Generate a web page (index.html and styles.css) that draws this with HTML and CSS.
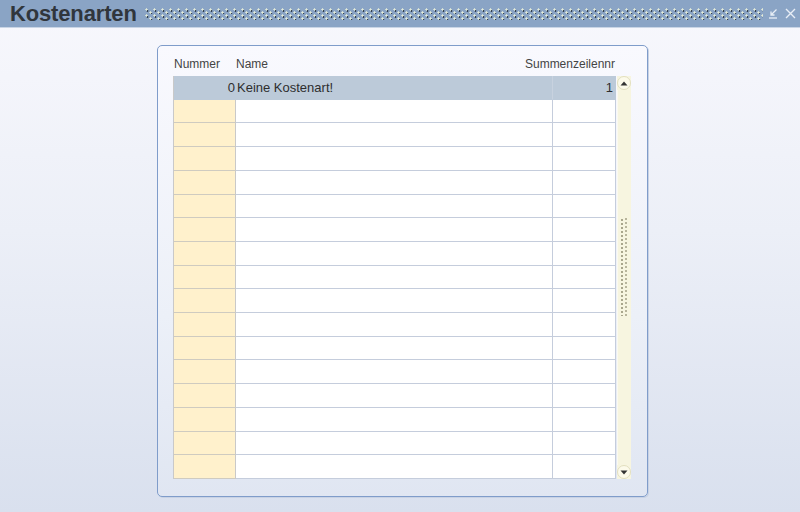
FILE: index.html
```html
<!DOCTYPE html>
<html>
<head>
<meta charset="utf-8">
<link rel="stylesheet" href="styles.css">
</head>
<body>
<div class="titlebar">
  <div class="title">Kostenarten</div>
  <div class="dots"></div>
  <div class="tools">
    <svg class="ico" width="11" height="11" viewBox="0 0 11 11"><path d="M8.5 1.5 L3 7 M3 3.5 V7 H6.5" fill="none" stroke="#e8eef6" stroke-width="1.3"/><path d="M1 10 H9" stroke="#e8eef6" stroke-width="1.3"/></svg>
    <svg class="ico" width="11" height="11" viewBox="0 0 11 11"><path d="M1 1 L10 10 M10 1 L1 10" stroke="#e8eef6" stroke-width="1.4"/></svg>
  </div>
</div>
<div class="content">
  <div class="panel">
    <div class="head">
      <div class="h-num">Nummer</div>
      <div class="h-name">Name</div>
      <div class="h-sum">Summenzeilennr</div>
    </div>
    <div class="body">
      <div class="table">
        <div class="row sel"><div class="c num">0</div><div class="c name">Keine Kostenart!</div><div class="c sum">1</div></div>
        <div class="row"><div class="c num"></div><div class="c name"></div><div class="c sum"></div></div>
        <div class="row"><div class="c num"></div><div class="c name"></div><div class="c sum"></div></div>
        <div class="row"><div class="c num"></div><div class="c name"></div><div class="c sum"></div></div>
        <div class="row"><div class="c num"></div><div class="c name"></div><div class="c sum"></div></div>
        <div class="row"><div class="c num"></div><div class="c name"></div><div class="c sum"></div></div>
        <div class="row"><div class="c num"></div><div class="c name"></div><div class="c sum"></div></div>
        <div class="row"><div class="c num"></div><div class="c name"></div><div class="c sum"></div></div>
        <div class="row"><div class="c num"></div><div class="c name"></div><div class="c sum"></div></div>
        <div class="row"><div class="c num"></div><div class="c name"></div><div class="c sum"></div></div>
        <div class="row"><div class="c num"></div><div class="c name"></div><div class="c sum"></div></div>
        <div class="row"><div class="c num"></div><div class="c name"></div><div class="c sum"></div></div>
        <div class="row"><div class="c num"></div><div class="c name"></div><div class="c sum"></div></div>
        <div class="row"><div class="c num"></div><div class="c name"></div><div class="c sum"></div></div>
        <div class="row"><div class="c num"></div><div class="c name"></div><div class="c sum"></div></div>
        <div class="row"><div class="c num"></div><div class="c name"></div><div class="c sum"></div></div>
        <div class="row"><div class="c num"></div><div class="c name"></div><div class="c sum"></div></div>
      </div>
      <div class="scroll">
        <div class="btn"><svg width="8" height="5" viewBox="0 0 8 5"><path d="M0.5 4.5 L4 0.5 L7.5 4.5 Z" fill="#333"/></svg></div>
        <div class="track">
          <div class="grip"></div>
        </div>
        <div class="btn"><svg width="8" height="5" viewBox="0 0 8 5"><path d="M0.5 0.5 L4 4.5 L7.5 0.5 Z" fill="#333"/></svg></div>
      </div>
    </div>
  </div>
</div>
</body>
</html>
```
FILE: styles.css
```css
html, body {
  margin: 0;
  padding: 0;
  width: 800px;
  height: 512px;
  overflow: hidden;
}
body {
  font-family: "Liberation Sans", Arial, sans-serif;
  background: linear-gradient(to bottom, #f8f8fd 0%, #eceff7 45%, #d9e0ee 100%);
}
.titlebar {
  height: 27px;
  background: #8aa4c5;
  border-bottom: 1px solid #c9d5e5;
  display: flex;
  align-items: center;
}
.title {
  font-weight: bold;
  font-size: 22px;
  color: #30363c;
  padding-left: 10px;
  line-height: 27px;
  letter-spacing: -0.15px;
}
.dots {
  flex: 1;
  height: 12px;
  margin: 1px 0 0 8px;
  background-image:
    radial-gradient(circle at 1.5px 1.5px, #e4ecd8 0.9px, transparent 1.3px),
    radial-gradient(circle at 2.5px 3px, #34414f 0.8px, transparent 1.2px),
    radial-gradient(circle at 5.5px 4.5px, #e4ecd8 0.9px, transparent 1.3px),
    radial-gradient(circle at 6.5px 6px, #34414f 0.8px, transparent 1.2px);
  background-size: 8px 6px;
}
.tools {
  display: flex;
  gap: 6px;
  padding: 0 4px 0 5px;
  align-items: center;
}
.ico { display: block; }
.content {
  padding: 17px 0 0 157px;
}
.panel {
  width: 474px;
  height: 450px;
  border: 1px solid #7f9cca;
  border-radius: 5px;
  padding: 0 0 0 15px;
  box-sizing: content-box;
  background: linear-gradient(to bottom, #f9f9fe 0%, #ecf0f8 60%, #e0e6f2 100%);
  box-shadow: 1px 1px 0 #c8d2e4;
}
.head {
  width: 443px;
  height: 30px;
  display: grid;
  grid-template-columns: 63px 1fr auto;
  font-size: 12px;
  color: #444;
  align-items: end;
  padding-bottom: 5px;
  box-sizing: border-box;
}
.h-num { padding-left: 1px; }
.h-name { padding-left: 0; }
.h-sum { text-align: right; margin-right: 1px; white-space: nowrap; }
.body {
  display: flex;
  height: 403px;
}
.table {
  width: 443px;
  height: 403px;
  display: grid;
  grid-template-rows: repeat(17, 1fr);
  border-left: 1px solid #c9c9c9;
  box-sizing: border-box;
}
.row {
  display: grid;
  grid-template-columns: 62px 317px 63px;
}
.c {
  border-bottom: 1px solid #c5cddc;
  border-right: 1px solid #c5cddc;
  font-size: 13px;
  color: #2e2e2e;
  display: flex;
  align-items: center;
  box-sizing: border-box;
  background: #fff;
}
.c.num {
  background: #fff1cc;
  border-bottom-color: #cfcbc0;
  border-right-color: #c9c9c9;
  justify-content: flex-end;
  padding-right: 0;
}
.c.name { padding-left: 1px; }
.c.sum { justify-content: flex-end; padding-right: 2px; }
.row.sel .c {
  background: #bccad9;
  border-bottom-color: #bccad9;
  border-right-color: #bccad9;
}
.row.sel .c.name { border-right-color: #c8d2df; }
.scroll {
  width: 14px;
  margin-left: 1px;
  display: flex;
  flex-direction: column;
  background: #f7f5e0;
}
.btn {
  height: 14px;
  border-radius: 7px;
  background: #fcfaea;
  border: 1px solid #e2dfbf;
  box-sizing: border-box;
  display: flex;
  align-items: center;
  justify-content: center;
}
.track {
  flex: 1;
  border-left: 1px solid #fbfaf0;
  padding-top: 128px;
}
.grip {
  height: 98px;
  width: 8px;
  margin-left: 2px;
  background-image:
    radial-gradient(circle at 2px 2px, #a9a68c 0.8px, transparent 1.1px),
    radial-gradient(circle at 6px 1px, #b8b59c 0.8px, transparent 1.1px);
  background-size: 8px 4px;
}
```
